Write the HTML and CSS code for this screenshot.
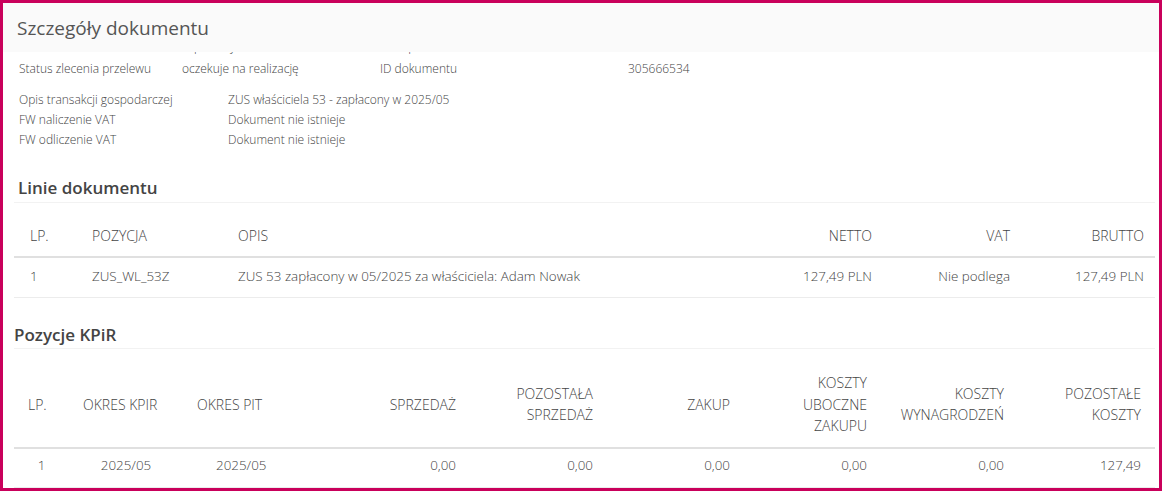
FILE: index.html
```html
<!DOCTYPE html>
<html lang="pl">
<head>
<meta charset="utf-8">
<title>Szczegóły dokumentu</title>
<link rel="stylesheet" href="styles.css">
</head>
<body>
<div class="frame">
  <div class="header">Szczegóły dokumentu</div>
  <div class="content">
    <div class="info info-top">
      <div>Status dokumentu</div><div>zapłacony</div><div>Data płatności</div><div>2025-06-10</div>
      <div>Status zlecenia przelewu</div><div>oczekuje na realizację</div><div>ID dokumentu</div><div>305666534</div>
    </div>
    <div class="info info-desc">
      <div>Opis transakcji gospodarczej</div><div>ZUS właściciela 53 - zapłacony w 2025/05</div>
      <div>FW naliczenie VAT</div><div>Dokument nie istnieje</div>
      <div>FW odliczenie VAT</div><div>Dokument nie istnieje</div>
    </div>

    <h2 class="section section-lines">Linie dokumentu</h2>
    <table class="tbl tbl-lines">
      <colgroup>
        <col class="c-lp"><col class="c-poz"><col><col class="c-netto"><col class="c-vat"><col class="c-brutto">
      </colgroup>
      <thead>
        <tr><th class="lp">LP.</th><th>POZYCJA</th><th>OPIS</th><th class="num">NETTO</th><th class="num">VAT</th><th class="num last">BRUTTO</th></tr>
      </thead>
      <tbody>
        <tr><td class="lp">1</td><td>ZUS_WL_53Z</td><td>ZUS 53 zapłacony w 05/2025 za właściciela: Adam Nowak</td><td class="num">127,49 PLN</td><td class="num">Nie podlega</td><td class="num last">127,49 PLN</td></tr>
      </tbody>
    </table>

    <h2 class="section section-kpir">Pozycje KPiR</h2>
    <table class="tbl tbl-kpir">
      <colgroup>
        <col class="k-lp"><col class="k-kpir"><col class="k-pit"><col class="k-n"><col class="k-n"><col class="k-n"><col class="k-n"><col class="k-n"><col class="k-n">
      </colgroup>
      <thead>
        <tr>
          <th>LP.</th><th>OKRES KPIR</th><th>OKRES PIT</th>
          <th class="num">SPRZEDAŻ</th>
          <th class="num">POZOSTAŁA<br>SPRZEDAŻ</th>
          <th class="num">ZAKUP</th>
          <th class="num">KOSZTY<br>UBOCZNE<br>ZAKUPU</th>
          <th class="num">KOSZTY<br>WYNAGRODZEŃ</th>
          <th class="num">POZOSTAŁE<br>KOSZTY</th>
        </tr>
      </thead>
      <tbody>
        <tr>
          <td class="center">1</td><td class="center">2025/05</td><td class="pit">2025/05</td>
          <td class="num">0,00</td><td class="num">0,00</td><td class="num">0,00</td><td class="num">0,00</td><td class="num">0,00</td><td class="num">127,49</td>
        </tr>
      </tbody>
    </table>
  </div>
</div>
</body>
</html>
```

FILE: styles.css
```css
html, body {
  margin: 0;
  padding: 0;
  background: #ffffff;
}

body {
  font-family: "Open Sans", "Liberation Sans", sans-serif;
  color: #444444;
  font-size: 12px;
  font-weight: 300;
}

.frame {
  width: 1162px;
  height: 491px;
  box-sizing: border-box;
  border: 3px solid #c9005b;
  display: flex;
  flex-direction: column;
  overflow: hidden;
}

.header {
  flex: 0 0 49px;
  box-sizing: border-box;
  background: #fafafa;
  padding-left: 14px;
  display: flex;
  align-items: center;
  font-size: 19px;
  font-weight: 400;
  color: #555555;
  position: relative;
  z-index: 1;
}

.content {
  flex: 1 1 auto;
  overflow: hidden;
  padding-right: 4px;
}

.info {
  display: grid;
  line-height: 20px;
  padding-left: 16px;
}

.info-top {
  grid-template-columns: 163px 198px 248px 1fr;
  row-gap: 2px;
  margin-top: -15px;
}

.info-desc {
  grid-template-columns: 209px 1fr;
  margin-top: 11px;
}

.section {
  margin: 0;
  font-size: 17px;
  font-weight: 600;
  color: #444444;
  line-height: 20px;
  border-bottom: 1px solid #f2f2f2;
  margin-left: 11px;
}

.section-lines {
  margin-top: 28px;
  padding-left: 4px;
  padding-bottom: 4px;
}

.section-kpir {
  margin-top: 27px;
  padding-left: 0;
  padding-bottom: 3px;
}

.tbl {
  border-collapse: collapse;
  table-layout: fixed;
  width: 1141px;
  margin-left: 11px;
  margin-top: 13px;
}

.tbl th {
  font-weight: 300;
  font-size: 14px;
  color: #444444;
  line-height: 20px;
  padding: 10px 14px;
  text-align: left;
  vertical-align: middle;
  border-bottom: 2px solid #e0e0e0;
}

.tbl td {
  font-size: 13.4px;
  line-height: 20px;
  padding: 8px 14px 11px;
  text-align: left;
  border-bottom: 1px solid #ececec;
  white-space: nowrap;
}

.tbl .num {
  text-align: right;
}

.tbl .lp {
  padding-left: 16px;
}

.tbl .last {
  padding-right: 11px;
}

.c-lp { width: 64px; }
.c-poz { width: 146px; }
.c-netto { width: 186px; }
.c-vat { width: 138px; }
.c-brutto { width: 131px; }

.k-lp { width: 55px; }
.k-kpir { width: 114px; }
.k-pit { width: 150px; }
.k-n { width: 137px; }

.tbl-kpir th {
  line-height: 21.5px;
}

.tbl-kpir td {
  padding-top: 6px;
  padding-bottom: 12px;
}

.tbl .center {
  text-align: center;
}

.tbl .pit {
  padding-left: 33px;
}
```
